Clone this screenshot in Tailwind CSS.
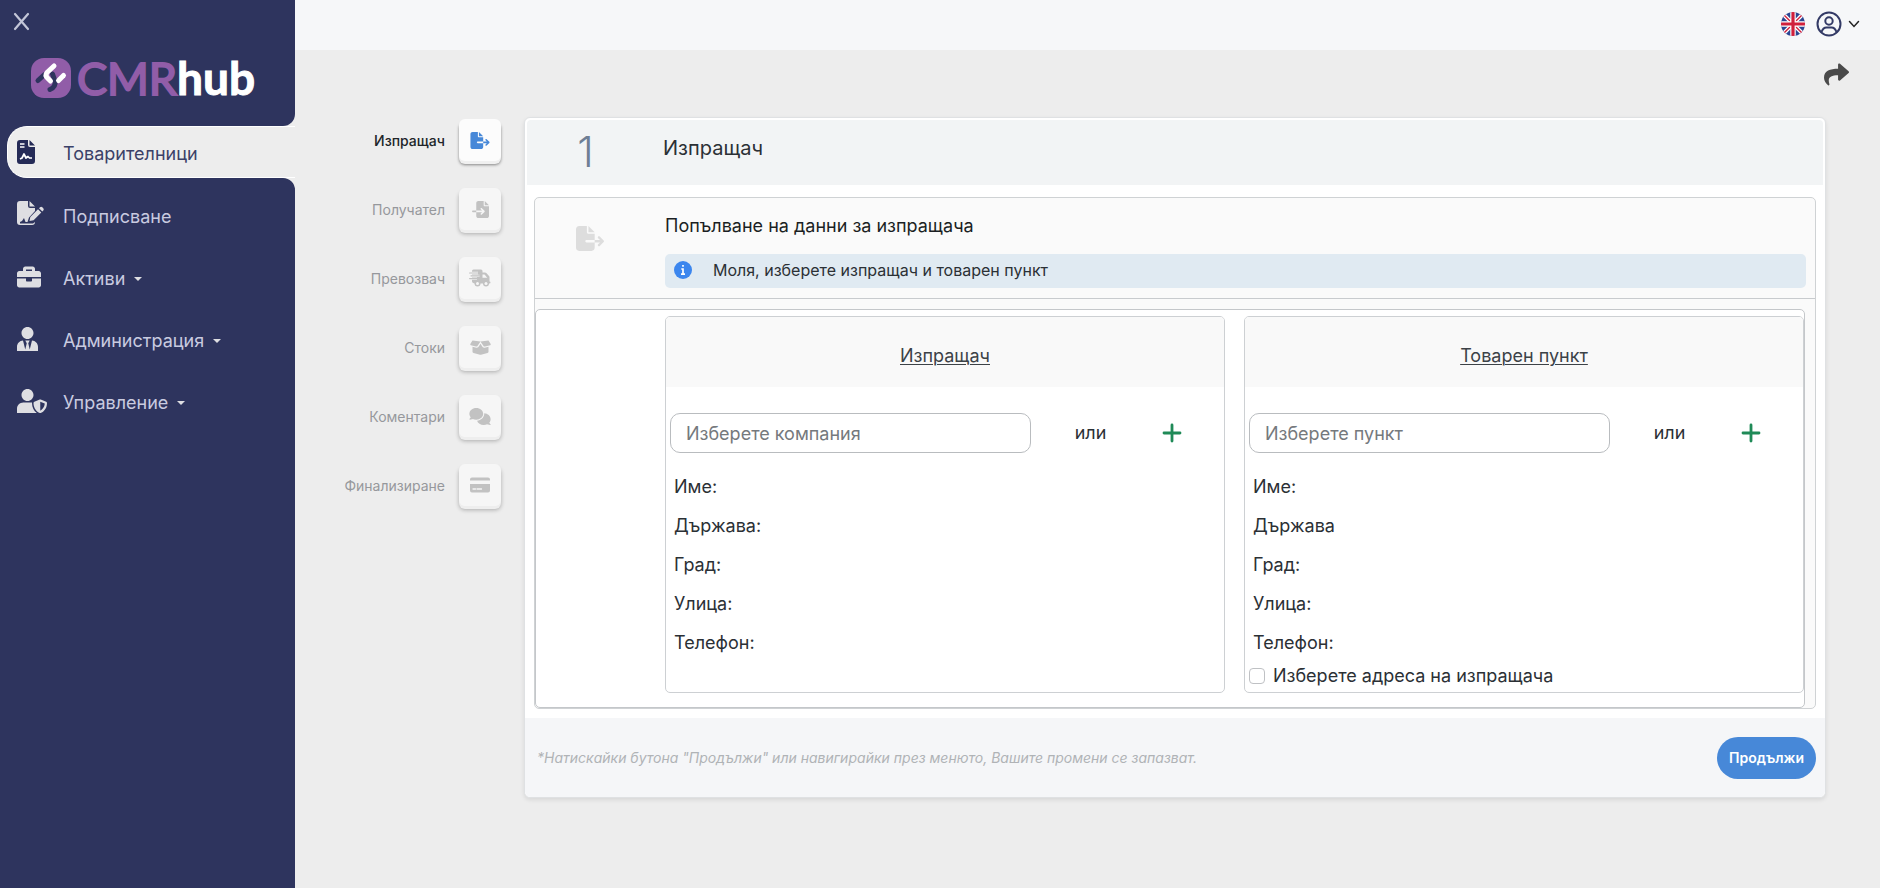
<!DOCTYPE html>
<html lang="bg">
<head>
<meta charset="utf-8">
<meta name="viewport" content="width=device-width, initial-scale=1">
<title>CMRhub – Товарителници</title>
<script src="https://cdn.jsdelivr.net/npm/@tailwindcss/browser@4"></script>
</head>
<body class="flex min-h-screen bg-[#ededed] font-['Inter','Open_Sans',sans-serif] text-lg leading-6 text-[#2b3035]">

<svg class="hidden" aria-hidden="true">
  <symbol id="export" viewBox="0 0 576 512"><path d="M0 64C0 28.7 28.7 0 64 0H224V128c0 17.7 14.3 32 32 32H384V288H216c-13.3 0-24 10.7-24 24s10.7 24 24 24H384V448c0 35.3-28.7 64-64 64H64c-35.3 0-64-28.7-64-64V64zM384 336V288H494.1l-39-39c-9.4-9.4-9.4-24.6 0-33.9s24.6-9.4 33.9 0l80 80c9.4 9.4 9.4 24.6 0 33.9l-80 80c-9.4 9.4-24.6 9.4-33.9 0s-9.4-24.6 0-33.9l39-39H384zm0-208H256V0L384 128z"/></symbol>
</svg>

<aside class="w-[295px] shrink-0 bg-[#2e345e]">
  <button type="button" aria-label="Затвори менюто" class="ml-3 mt-3 block">
    <svg class="h-[19px] w-[19px]" viewBox="0 0 19 19" fill="none" stroke="#c3c6d8" stroke-width="2.2" stroke-linecap="round"><path d="M3 2l13 15M16 2L3 17"/></svg>
  </button>
  <a href="#" class="ml-[30px] mt-[23px] flex h-[48px] items-center" aria-label="CMRhub">
    <svg class="h-[42px] w-[42px] shrink-0" viewBox="0 0 42 42">
      <rect x="1" y="1" width="40" height="40" rx="13" fill="#915da8"/>
      <g fill="none" stroke-linecap="round" stroke-linejoin="round" stroke-width="5">
        <path d="M8 23.500L14 18" stroke="#2e345e"/>
        <path d="M20 32.500Q26 30 25 24L22.500 17" stroke="#2e345e"/>
        <path d="M24 9L17 15.500Q14.500 18.500 18 21.500L20.500 24" stroke="#fff"/>
        <path d="M28.500 23.500L33.500 18.500" stroke="#fff"/>
      </g>
    </svg>
    <span class="ml-[5px] font-['Lato',sans-serif] text-[45px] leading-[48px] text-[#915da8] [-webkit-text-stroke:2px_#915da8] [stroke-linejoin:round]">CMR</span><span class="font-['Lato',sans-serif] text-[46px] leading-[48px] font-bold text-white [-webkit-text-stroke:1px_#fff]">hub</span>
  </a>

  <nav class="mt-3 text-[#c9cbe0]">
    <div class="h-3 bg-[#ededed]"><div class="h-full rounded-br-[12px] bg-[#2e345e]"></div></div>
    <a href="#" aria-current="page" class="ml-[7px] flex h-[52px] items-center rounded-l-[20px] border-y border-l border-white bg-[#ededed] pl-[9px] text-[#3b4168]">
      <svg class="h-6 w-[46px] shrink-0" viewBox="0 0 46 24"><path fill="#252b57" d="M3 0h8v5q0 2 2 2h5v14q0 3-3 3H3q-3 0-3-3V3q0-3 3-3zM12.500 0L18 5.500h-5.500z"/><path d="M3 4h4.500M3 7h4.500" stroke="#fff" stroke-width="1.500"/><path d="M3 19l2-1 2-4 2 4 2-1.500 1.500 1.500H15" fill="none" stroke="#fff" stroke-width="1.700" stroke-linejoin="round"/></svg>
      <span class="pt-1">Товарителници</span>
    </a>
    <div class="ml-7 h-3 bg-[#ededed]"><div class="h-full rounded-tr-[12px] bg-[#2e345e]"></div></div>

    <div class="-mt-1.5 flex flex-col">
      <a href="#" class="flex h-[62px] items-center pl-[17px]">
        <svg class="h-7 w-[46px] shrink-0" viewBox="0 0 46 28" fill="#dedee2"><path d="M3 0h8v5q0 2 2 2h5v3l-6 6.500-1.500 4.500H8.500L7 17l-2 3-2 1v1.500h13L18 21q0 3-3 3H3q-3 0-3-3V3q0-3 3-3zM12.500 0L18 5.500h-5.500zM12.500 20l.8-4L21 8.300l3.300 3.300L16.600 19.200zM22 7.300l1-1q1.200-1 2.300 0l1 1q1 1.200 0 2.300l-1 1z"/></svg>
        <span class="pt-1">Подписване</span>
      </a>
      <a href="#" class="flex h-[62px] items-center pl-[17px]">
        <svg class="h-6 w-6 shrink-0" viewBox="0 0 512 512" fill="#dedee2"><path d="M320 336c0 8.840-7.160 16-16 16h-96c-8.840 0-16-7.160-16-16v-48H0v144c0 25.600 22.400 48 48 48h416c25.600 0 48-22.400 48-48V288H320v48zm144-208h-80V80c0-25.600-22.400-48-48-48H176c-25.600 0-48 22.400-48 48v48H48c-25.600 0-48 22.400-48 48v80h512v-80c0-25.600-22.400-48-48-48zm-144 0H192V96h128v32z"/></svg>
        <span class="ml-[22px] pt-1">Активи</span>
        <svg class="ml-[9px] mt-1 h-1 w-2" viewBox="0 0 8 4" fill="#dedee2"><path d="M0 0h8L4 4z"/></svg>
      </a>
      <a href="#" class="flex h-[62px] items-center pl-[17px]">
        <svg class="h-6 w-[21px] shrink-0" viewBox="0 0 448 512" fill="#dedee2"><path d="M224 256c70.700 0 128-57.300 128-128S294.700 0 224 0 96 57.300 96 128s57.300 128 128 128zm95.800 32.600L272 480l-32-136 32-56h-96l32 56-32 136-47.800-191.400C56.900 292 0 350.300 0 422.400V512H448v-89.600c0-72.100-56.900-130.400-128.200-133.800z"/></svg>
        <span class="ml-[25px] pt-1">Администрация</span>
        <svg class="ml-[9px] mt-1 h-1 w-2" viewBox="0 0 8 4" fill="#dedee2"><path d="M0 0h8L4 4z"/></svg>
      </a>
      <a href="#" class="flex h-[62px] items-center pl-[17px]">
        <svg class="h-6 w-[30px] shrink-0" viewBox="0 0 640 512" fill="#dedee2"><path d="M622.300 271.100l-115.200-45c-4.100-1.600-12.600-3.700-22.200 0l-115.200 45c-10.700 4.200-17.700 14-17.700 24.900 0 111.600 68.700 188.800 132.900 213.900 9.600 3.700 18 1.600 22.200 0C558.400 489.900 640 420.500 640 296c0-10.900-7-20.700-17.700-24.900zM496 462.400V273.300l95.500 37.300c-5.600 87.100-60.900 135.400-95.500 151.800zM224 256c70.700 0 128-57.300 128-128S294.700 0 224 0 96 57.300 96 128s57.300 128 128 128zm96 40c0-2.500.8-4.800 1.100-7.200-2.500-.1-4.900-.8-7.500-.8H134.400C60.200 288 0 348.200 0 422.400V512h400c6.800 0 13.300-1.500 19.200-4-54-42.900-99.200-116.700-99.200-212z"/></svg>
        <span class="ml-4 pt-1">Управление</span>
        <svg class="ml-[9px] mt-1 h-1 w-2" viewBox="0 0 8 4" fill="#dedee2"><path d="M0 0h8L4 4z"/></svg>
      </a>
    </div>
  </nav>
</aside>

<div class="min-w-0 flex-1">
  <header class="flex h-[50px] items-center justify-end bg-[#f6f7f9] pr-5">
    <button type="button" aria-label="English" class="mb-0.5">
      <svg class="h-6 w-6" viewBox="0 0 24 24"><defs><clipPath id="round"><circle cx="12" cy="12" r="12"/></clipPath></defs><g clip-path="url(#round)"><path fill="#2b4592" d="M0 0h24v24H0z"/><path d="M0 0l24 24M24 0L0 24" stroke="#fff" stroke-width="4"/><path d="M0 0l24 24M24 0L0 24" stroke="#d01f3c" stroke-width="1.400"/><path d="M12 0v24M0 12h24" stroke="#fff" stroke-width="5.500"/><path d="M12 0v24M0 12h24" stroke="#d01f3c" stroke-width="3.200"/></g></svg>
    </button>
    <button type="button" aria-label="Профил" class="mb-0.5 ml-[11px] flex items-center">
      <svg class="h-[26px] w-[26px]" viewBox="0 0 26 26" fill="none" stroke="#333a66" stroke-width="2"><circle cx="13" cy="13" r="11.500"/><circle cx="13" cy="10" r="3.700"/><path d="M5.500 21q1.500-4.500 5-4.500h5q3.500 0 5 4.500"/></svg>
      <svg class="ml-1.5 h-3 w-3" viewBox="0 0 12 12" fill="none" stroke="#222" stroke-width="1.500" stroke-linecap="round"><path d="M1.500 3.500L6 8.500l4.500-5"/></svg>
    </button>
  </header>

  <div class="flex h-[67px] items-start justify-end pr-[31px] pt-[12px]">
    <button type="button" aria-label="Сподели"><svg class="h-[25px] w-[25px]" viewBox="0 0 512 512" fill="#4a4a4a"><path d="M503.691 189.836L327.687 37.851C312.281 24.546 288 35.347 288 56.015v80.053C127.371 137.907 0 170.100 0 322.326c0 61.441 39.581 122.309 83.333 154.132 13.653 9.931 33.111-2.533 28.077-18.631C66.066 312.814 132.917 274.316 288 272.085V360c0 20.700 24.300 31.453 39.687 18.164l176.004-152c11.071-9.562 11.086-26.753 0-36.328z"/></svg></button>
  </div>

  <main class="flex items-start gap-[23px] pr-[54px]">
    <nav aria-label="Стъпки" class="flex w-[206px] shrink-0 flex-col gap-[27px] pt-0.5 text-sm text-[#96989c]">
      <a href="#" class="flex h-[42px] items-center justify-end gap-3.5 font-medium text-[#212529]"><span class="pt-0.5">Изпращач</span>
        <span class="flex h-[42px] w-[42px] items-center justify-center rounded-md bg-[#fcfcfc] shadow-[0_3px_0_#f0f0f0,0_4px_3px_#00000070]"><svg class="h-[17px] w-5 text-[#4788d8]" fill="currentColor"><use href="#export"/></svg></span></a>
      <a href="#" class="flex h-[42px] items-center justify-end gap-3.5"><span class="pt-0.5">Получател</span>
        <span class="flex h-[42px] w-[42px] items-center justify-center rounded-md bg-[#f6f6f6] shadow-[0_3px_0_#eeeeee,0_4px_4px_#00000048]"><svg class="h-[17px] w-[17px]" viewBox="0 0 512 512" fill="#c2c2c2"><path d="M128 64c0-35.300 28.700-64 64-64H352V128c0 17.700 14.300 32 32 32H512V448c0 35.300-28.700 64-64 64H192c-35.300 0-64-28.700-64-64V336H302.100l-39 39c-9.400 9.400-9.400 24.600 0 33.900s24.600 9.400 33.900 0l80-80c9.400-9.400 9.400-24.600 0-33.900l-80-80c-9.400-9.400-24.600-9.400-33.900 0s-9.400 24.600 0 33.900l39 39H128V64zm0 224v48H24c-13.300 0-24-10.700-24-24s10.700-24 24-24H128zM512 128H384V0L512 128z"/></svg></span></a>
      <a href="#" class="flex h-[42px] items-center justify-end gap-3.5"><span class="pt-0.5">Превозвач</span>
        <span class="flex h-[42px] w-[42px] items-center justify-center rounded-md bg-[#f6f6f6] shadow-[0_3px_0_#eeeeee,0_4px_4px_#00000048]"><svg class="h-[18px] w-[22px]" viewBox="0 0 22 18"><path fill="#c2c2c2" d="M3 2q0-1.500 1.500-1.500H12q1.500 0 1.500 1.500v1.500h2.500q.8 0 1.300.5L20 7q.5.500.5 1.200v4.300q1 0 1 1t-1 1H20a3 3 0 0 1-6 0h-2.500a3 3 0 0 1-6 0q-2.500-.5-2.500-2z"/><path fill="#f6f6f6" d="M13.500 5.500v3.200h4.800L15.500 5.500z"/><circle cx="8.500" cy="14.500" r="1.500" fill="#f6f6f6"/><circle cx="17" cy="14.500" r="1.500" fill="#f6f6f6"/><path d="M0 4h9M1.500 6.800h9M0 9.600h8" stroke="#f6f6f6" stroke-width="2.300"/><path d="M.6 4h8.400M2 6.800h8.400M.6 9.600h7.400" stroke="#c2c2c2" stroke-width="1.200" stroke-linecap="round"/></svg></span></a>
      <a href="#" class="flex h-[42px] items-center justify-end gap-3.5"><span class="pt-0.5">Стоки</span>
        <span class="flex h-[42px] w-[42px] items-center justify-center rounded-md bg-[#f6f6f6] shadow-[0_3px_0_#eeeeee,0_4px_4px_#00000048]"><svg class="h-[17px] w-[21px]" viewBox="0 0 21 17" fill="#c2c2c2"><path d="M2.500 1.500L10.500 2.500 7.500 7Q7 7.800 6 7.500L.8 6.200Q0 6 .3 5zM18.500 1.500L10.500 2.500 13.500 7Q14 7.800 15 7.500L20.200 6.200Q21 6 20.700 5zM2.500 7.800L6.300 8.800Q7.700 9 8.400 8L10.500 4.800 12.600 8Q13.300 9 14.700 8.800L18.500 7.800V12.800Q18.500 13.800 17.500 14L11 15.700Q10.500 15.800 10 15.700L3.500 14Q2.500 13.800 2.500 12.800z"/></svg></span></a>
      <a href="#" class="flex h-[42px] items-center justify-end gap-3.5"><span class="pt-0.5">Коментари</span>
        <span class="flex h-[42px] w-[42px] items-center justify-center rounded-md bg-[#f6f6f6] shadow-[0_3px_0_#eeeeee,0_4px_4px_#00000048]"><svg class="h-[17px] w-[22px]" viewBox="0 0 640 512" fill="#c2c2c2"><path d="M208 352c114.900 0 208-78.800 208-176S322.900 0 208 0S0 78.800 0 176c0 38.600 14.700 74.300 39.600 103.400c-3.500 9.400-8.700 17.700-14.200 24.700c-4.800 6.200-9.700 11-13.300 14.300l-5.600 4.700C1 327.200-1.400 334.400 .8 340.900S9.100 352 16 352c21.800 0 43.800-5.600 62.100-12.500c9.200-3.500 17.800-7.400 25.300-11.400C134.100 343.300 169.800 352 208 352zM448 176c0 112.300-99.100 196.900-216.500 207C255.800 457.400 336.400 512 432 512c38.200 0 73.900-8.700 104.700-23.900c7.500 4 16 7.900 25.200 11.400c18.300 6.900 40.300 12.500 62.100 12.500c6.900 0 13.100-4.500 15.200-11.100c2.100-6.600-.2-13.800-5.800-17.900l-5.800-4.700c-3.600-3.300-8.500-8.100-13.300-14.300c-5.500-7-10.700-15.400-14.200-24.700c24.900-29 39.600-64.700 39.600-103.400c0-92.800-84.900-168.900-192.600-175.500c.4 5.100 .6 10.300 .6 15.500z"/></svg></span></a>
      <a href="#" class="flex h-[42px] items-center justify-end gap-3.5"><span class="pt-0.5">Финализиране</span>
        <span class="flex h-[42px] w-[42px] items-center justify-center rounded-md bg-[#f6f6f6] shadow-[0_3px_0_#eeeeee,0_4px_4px_#00000048]"><svg class="h-4 w-5" viewBox="0 0 20 16" fill="#c2c2c2"><path d="M2 .5h16q2 0 2 2v1H0v-1q0-2 2-2zM0 7h20v6.500q0 2-2 2H2q-2 0-2-2z"/><path d="M3 12h2.500M7 12h4.500" stroke="#f6f6f6" stroke-width="1.300" stroke-linecap="round"/></svg></span></a>
    </nav>

    <section class="min-w-0 flex-1 rounded-md border border-[#dfe1e3] bg-white shadow-[0_2px_4px_#00000018]">
      <div class="mx-0.5 mt-0.5 grid h-[65px] grid-cols-[136px_1fr] rounded-t bg-[#f2f4f5]">
        <span class="flex items-center justify-center pb-0.5 pr-[19px] text-[42px] font-light leading-none text-[#6f7f95]">1</span>
        <h1 class="flex items-center pb-2.5 text-xl">Изпращач</h1>
      </div>

      <div class="mx-[9px] mb-[9px] mt-3 rounded-[5px] border border-[#cfd2d4] bg-[#fafafa]">
        <div class="grid grid-cols-[130px_1fr] border-b border-[#c8cbce] pb-[10px] pr-[9px] pt-4">
          <svg class="ml-[41px] mt-3 h-[25px] w-7 text-[#dddddd]" fill="currentColor"><use href="#export"/></svg>
          <div>
            <h2 class="text-lg leading-6 text-[#1b1f23]">Попълване на данни за изпращача</h2>
            <p class="mt-4 flex h-[34px] items-center rounded-[5px] bg-[#e0eaf2] pb-0.5 pl-[9px] text-base">
              <svg class="mr-[21px] h-[18px] w-[18px]" viewBox="0 0 18 18"><circle cx="9" cy="9" r="9" fill="#3b86ee"/><path d="M9 4v1.800M7.300 8H9v5M7 13.200h4" stroke="#fff" stroke-width="1.700" fill="none"/></svg>
              Моля, изберете изпращач и товарен пункт
            </p>
          </div>
        </div>

        <div class="mr-[10px] mt-[10px] grid grid-cols-2 gap-x-[19px] rounded-[5px] border border-[#c4c7ca] bg-white pb-[14px] pl-[129px] pt-[6px]">
          <fieldset class="min-w-0 rounded-[5px] border border-[#cdd0d3]">
            <div class="flex h-[70px] items-center justify-center rounded-t bg-[#f9f9f9] pt-2 text-[#3c4247]"><span class="underline decoration-1 underline-offset-2">Изпращач</span></div>
            <div class="mt-[26px] flex items-center pl-1">
              <input type="text" aria-label="Изберете компания" placeholder="Изберете компания" class="h-[40px] w-[361px] min-w-0 rounded-[10px] border border-[#b9bcbf] bg-white px-[15px] placeholder:text-[#75797d]">
              <span class="flex-1 pr-3 text-center">или</span>
              <button type="button" aria-label="Добави компания" class="mr-[42px]"><svg class="h-5 w-5" viewBox="0 0 20 20" stroke="#1f8a57" stroke-width="2.800" stroke-linecap="round"><path d="M10 2v16M2 10h16"/></svg></button>
            </div>
            <dl class="mt-[14px] pl-2 leading-[39px]">
              <dt>Име:</dt><dt>Държава:</dt><dt>Град:</dt><dt>Улица:</dt><dt>Телефон:</dt>
            </dl>
          </fieldset>
          <fieldset class="min-w-0 rounded-[5px] border border-[#cdd0d3]">
            <div class="flex h-[70px] items-center justify-center rounded-t bg-[#f9f9f9] pt-2 text-[#3c4247]"><span class="underline decoration-1 underline-offset-2">Товарен пункт</span></div>
            <div class="mt-[26px] flex items-center pl-1">
              <input type="text" aria-label="Изберете пункт" placeholder="Изберете пункт" class="h-[40px] w-[361px] min-w-0 rounded-[10px] border border-[#b9bcbf] bg-white px-[15px] placeholder:text-[#75797d]">
              <span class="flex-1 pr-3 text-center">или</span>
              <button type="button" aria-label="Добави пункт" class="mr-[42px]"><svg class="h-5 w-5" viewBox="0 0 20 20" stroke="#1f8a57" stroke-width="2.800" stroke-linecap="round"><path d="M10 2v16M2 10h16"/></svg></button>
            </div>
            <dl class="mt-[14px] pl-2 leading-[39px]">
              <dt>Име:</dt><dt>Държава</dt><dt>Град:</dt><dt>Улица:</dt><dt>Телефон:</dt>
            </dl>
            <label class="mb-1 mt-0.5 flex items-center gap-2 pl-1 leading-6">
              <input type="checkbox" class="h-4 w-4 appearance-none rounded border border-[#bfc1c4] bg-white checked:bg-[#4788d8]">Изберете адреса на изпращача
            </label>
          </fieldset>
        </div>
      </div>

      <footer class="flex h-[79px] items-center justify-between rounded-b-md bg-[#f5f6f8] pl-3 pr-[9px]">
        <p class="text-sm italic text-[#b0b3b6]">*Натискайки бутона "Продължи" или навигирайки през менюто, Вашите промени се запазват.</p>
        <button type="button" class="h-[42px] rounded-full bg-[#4788d8] px-3 text-sm font-semibold text-white">Продължи</button>
      </footer>
    </section>
  </main>
</div>
</body>
</html>
